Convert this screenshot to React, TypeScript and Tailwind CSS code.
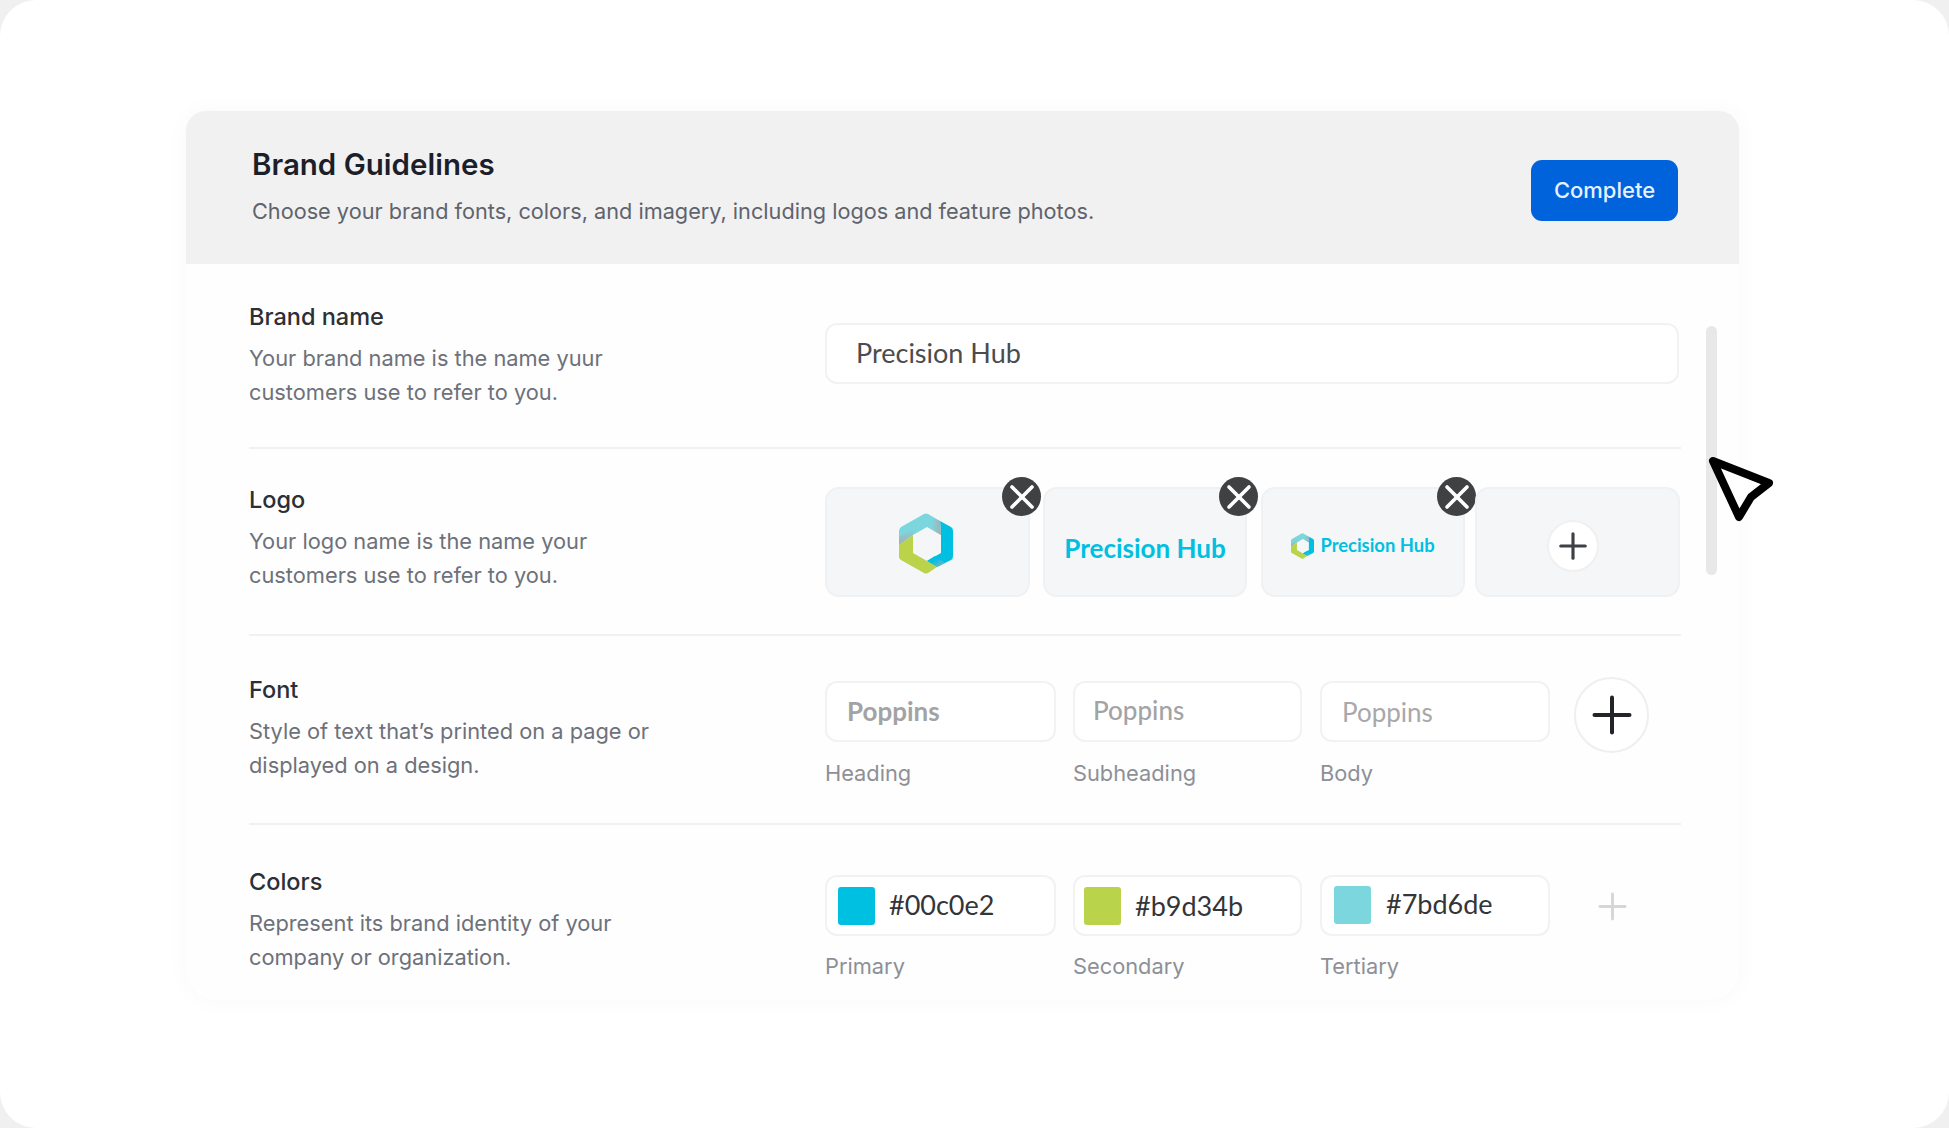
import type { ReactNode } from "react";
import { Plus, X } from "lucide-react";

const inter = "font-['Inter',sans-serif]";
const poppins = "font-['Lato',sans-serif]";

function HexLogo({ className }: { className: string }) {
  return (
    <svg viewBox="0 0 54 61" className={className}>
      <defs>
        <linearGradient id="hexFadeRight" x1="0" y1="0" x2="1" y2="0">
          <stop offset="0" stopColor="#a9adb0" stopOpacity="0" />
          <stop offset="1" stopColor="#a9adb0" />
        </linearGradient>
        <linearGradient id="hexFadeDown" x1="0" y1="0" x2="0" y2="1">
          <stop offset="0" stopColor="#a9adb0" stopOpacity="0" />
          <stop offset="1" stopColor="#a9adb0" />
        </linearGradient>
        <linearGradient id="hexTail" x1="0" y1="0" x2="1" y2="1">
          <stop offset="0.4" stopColor="#00c0e2" />
          <stop offset="1" stopColor="#8fb4c0" />
        </linearGradient>
      </defs>
      <path d="M41 8 L52 14 Q54 15 54 18 L54 43 Q54 46 52 47 L38 54 L28 48 L42 40 L42 22 Z" fill="#00c0e2" />
      <path d="M46 50 L38 54 L28 48 L36 43 Z" fill="url(#hexTail)" />
      <path d="M25 1 Q27 0 29 1 L41 8 L42 22 L28 14 L14 22 L0 32 L0 18 Q0 16 2 14 Z" fill="#7bd6de" />
      <path d="M33 5 L41 8 L42 22 L33 17 Z" fill="url(#hexFadeRight)" />
      <path d="M0 24 L14 16 L14 22 L0 32 Z" fill="url(#hexFadeDown)" />
      <path d="M0 32 L14 22 L14 40 L28 48 L38 54 L29 60 Q27 61 25 60 L2 47 Q0 46 0 44 Z" fill="#b9d34b" />
    </svg>
  );
}

function SectionText({ title, lines, top }: { title: string; lines: string[]; top: string }) {
  return (
    <div className={`w-[576px] shrink-0 ${top} ${inter}`}>
      <div className="text-[23.5px] leading-[30px] font-medium text-[#2c2f36]">{title}</div>
      <div className="mt-[9px] text-[21.8px] leading-[34px] text-[#6d717a]">
        {lines.map((l) => (
          <div key={l}>{l}</div>
        ))}
      </div>
    </div>
  );
}

function LogoTile({ className, children, remove }: { className: string; children: ReactNode; remove?: boolean }) {
  return (
    <div className={`relative flex h-[110px] shrink-0 items-center justify-center rounded-[14px] border-2 border-[#f0f1f3] bg-[#f5f6f8] ${className}`}>
      {children}
      {remove && (
        <div className={`absolute top-[-12px] flex h-[39px] w-[39px] items-center justify-center rounded-full bg-[#3f4142] ${remove === true ? "right-[-13px]" : ""}`}>
          <X size={40} strokeWidth={2.2} className="shrink-0 text-white" />
        </div>
      )}
    </div>
  );
}

function Field({ label, className, labelGap, children }: { label: string; className: string; labelGap: string; children: ReactNode }) {
  return (
    <div className={`shrink-0 ${className}`}>
      <div className="flex h-[61px] items-center rounded-[12px] border-2 border-[#f2f2f3] bg-white">{children}</div>
      <div className={`${labelGap} text-[21.8px] leading-[30px] text-[#8d9096] ${inter}`}>{label}</div>
    </div>
  );
}

function ColorField({ label, color, className, swatch, text }: { label: string; color: string; className: string; swatch: string; text: string }) {
  return (
    <Field label={label} className={className} labelGap="mt-[15px]">
      <div className={`h-[38px] w-[37px] rounded-[3px] ${swatch}`} style={{ backgroundColor: color }} />
      <span className={`text-[27px] text-[#333538] ${text} ${poppins}`}>{color}</span>
    </Field>
  );
}

export default function App() {
  return (
    <div className="relative h-[1128px] w-[1949px] overflow-hidden bg-[#f0f0f0]">
      <div className="h-[1128px] w-[1949px] rounded-[36px] bg-white pl-[186px] pt-[111px]">
        <div className="h-[889px] w-[1553px] rounded-t-[20px] rounded-b-[30px] bg-[#fefefe] shadow-[0_0_24px_rgba(0,0,0,0.03)]">
          <div className={`flex h-[153px] items-center justify-between rounded-t-[20px] bg-[#f1f1f2] pl-[66px] pr-[61px] ${inter}`}>
            <div className="pb-[5px]">
              <h1 className="text-[29.5px] leading-[38px] font-semibold text-[#1c1f2a]">Brand Guidelines</h1>
              <p className="mt-[13px] text-[21.7px] leading-[30px] text-[#5f636c]">
                Choose your brand fonts, colors, and imagery, including logos and feature photos.
              </p>
            </div>
            <button className="mt-[6px] h-[61px] w-[147px] rounded-[11px] bg-[#0063dc] text-[22px] font-medium text-[#e6f1ff]">Complete</button>
          </div>

          <div className="relative pl-[63px]">
            {/* scrollbar */}
            <div className="absolute left-[1520px] top-[62px] h-[249px] w-[11px] rounded-full bg-[#e8e8e9]" />

            <div className="flex h-[185px] w-[1432px] border-b-2 border-[#f1f1f2]">
              <SectionText title="Brand name" lines={["Your brand name is the name yuur", "customers use to refer to you."]} top="pt-[38px]" />
              <div className="pt-[59px]">
                <div className={`flex h-[61px] w-[854px] items-center rounded-[12px] border-2 border-[#f2f2f3] bg-white pl-[29px] text-[27px] text-[#4a4c50] ${poppins}`}>
                  Precision Hub
                </div>
              </div>
            </div>

            <div className="flex h-[187px] w-[1432px] border-b-2 border-[#f1f1f2]">
              <SectionText title="Logo" lines={["Your logo name is the name your", "customers use to refer to you."]} top="pt-[36px]" />
              <div className="flex pt-[38px]">
                <LogoTile className="w-[205px]" remove>
                  <HexLogo className="mr-[3px] mt-[2px] h-[61px] w-[54px]" />
                </LogoTile>
                <LogoTile className="ml-[13px] w-[204px]" remove>
                  <span className="mt-[13px] text-[26px] font-bold text-[#00c0e2] font-['Lato',sans-serif]">Precision Hub</span>
                </LogoTile>
                <LogoTile className="ml-[14px] w-[204px]" remove>
                  <div className="mt-[8px] flex items-center gap-[6px]">
                    <HexLogo className="h-[26px] w-[23px]" />
                    <span className="text-[18.4px] font-bold text-[#00c0e2] font-['Lato',sans-serif]">Precision Hub</span>
                  </div>
                </LogoTile>
                <LogoTile className="ml-[10px] w-[205px]">
                  <div className="mr-[9px] mt-[8px] flex h-[52px] w-[52px] items-center justify-center rounded-full border-2 border-[#f0f0f1] bg-white">
                    <Plus size={42} strokeWidth={1.8} className="shrink-0 text-[#3e4046]" />
                  </div>
                </LogoTile>
              </div>
            </div>

            <div className="flex h-[189px] w-[1432px] border-b-2 border-[#f1f1f2]">
              <SectionText title="Font" lines={["Style of text that’s printed on a page or", "displayed on a design."]} top="pt-[39px]" />
              <div className="flex items-start gap-[17px] pt-[45px]">
                <Field label="Heading" className="w-[231px]" labelGap="mt-[16px]">
                  <span className={`pl-[20px] text-[26px] font-bold text-[#a3a3a5] ${poppins}`}>Poppins</span>
                </Field>
                <Field label="Subheading" className="w-[229px]" labelGap="mt-[16px]">
                  <span className={`pb-[2px] pl-[18px] text-[26px] font-medium text-[#a3a3a5] ${poppins}`}>Poppins</span>
                </Field>
                <Field label="Body" className="ml-[1px] w-[230px]" labelGap="mt-[16px]">
                  <span className={`pt-[2px] pl-[20px] text-[26px] text-[#a8a8aa] ${poppins}`}>Poppins</span>
                </Field>
                <div className="ml-[7px] -mt-[4px] flex h-[76px] w-[75px] items-center justify-center rounded-full border-2 border-[#efeff0] bg-white">
                  <Plus size={60} strokeWidth={1.6} className="shrink-0 text-[#222428]" />
                </div>
              </div>
            </div>

            <div className="flex h-[175px] w-[1432px]">
              <SectionText title="Colors" lines={["Represent its brand identity of your", "company or organization."]} top="pt-[42px]" />
              <div className="flex items-start gap-[17px] pt-[50px]">
                <ColorField label="Primary" color="#00c0e2" className="w-[231px]" swatch="ml-[11px]" text="ml-[14px]" />
                <ColorField label="Secondary" color="#b9d34b" className="w-[229px]" swatch="ml-[9px]" text="ml-[14px] pt-[2px]" />
                <ColorField label="Tertiary" color="#7bd6de" className="ml-[1px] w-[230px]" swatch="ml-[12px] mb-[2px]" text="ml-[15px] pb-[2px]" />
                <Plus size={43} strokeWidth={1.6} className="ml-[24px] mt-[10px] shrink-0 text-[#d6d6d7]" />
              </div>
            </div>
          </div>
        </div>
      </div>

      {/* pointer */}
      <svg viewBox="0 0 72 72" className="absolute left-[1705px] top-[453px] h-[72px] w-[72px]">
        <path d="M8 8 L64 30 L46 44 L34 64 Z" fill="#fff" stroke="#000" strokeWidth="8" strokeLinejoin="round" />
      </svg>
    </div>
  );
}
